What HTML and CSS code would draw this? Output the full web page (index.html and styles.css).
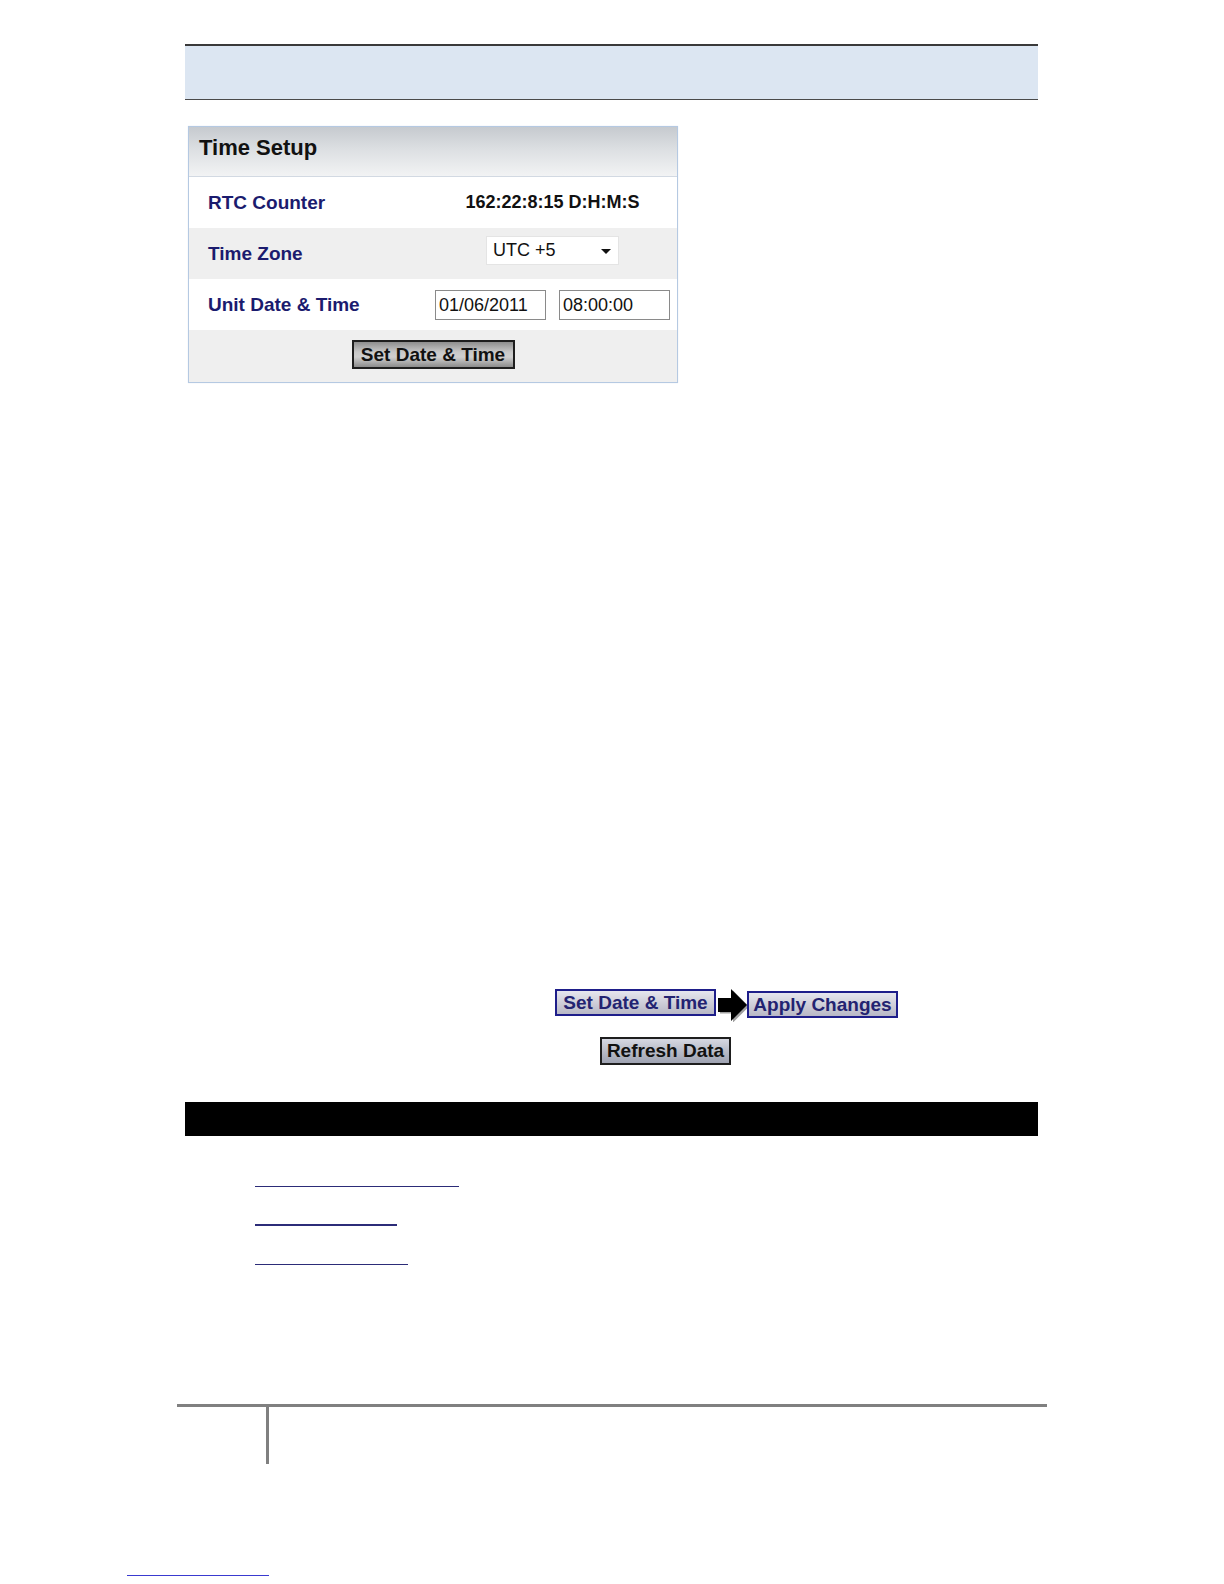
FILE: index.html
```html
<!DOCTYPE html>
<html>
<head>
<meta charset="utf-8">
<link rel="stylesheet" href="styles.css">
</head>
<body>
<div class="page">
  <div class="topbar"></div>

  <div class="panel">
    <div class="panel-head">Time Setup</div>
    <div class="row row-white">
      <div class="label">RTC Counter</div>
      <div class="value"><span class="counter">162:22:8:15 D:H:M:S</span></div>
    </div>
    <div class="row row-gray">
      <div class="label">Time Zone</div>
      <div class="value">
        <div class="select"><span>UTC +5</span><span class="caret"></span></div>
      </div>
    </div>
    <div class="row row-white">
      <div class="label">Unit Date &amp; Time</div>
      <div class="value inputs">
        <div class="input">01/06/2011</div>
        <div class="input">08:00:00</div>
      </div>
    </div>
    <div class="row row-gray row-btn">
      <div class="btn-dark">Set Date &amp; Time</div>
    </div>
  </div>

  <div class="actions">
    <div class="action-line">
      <div class="btn-blue btn-set">Set Date &amp; Time</div>
      <svg class="arrow" width="32" height="34" viewBox="0 0 32 34">
        <path d="M1 10 H14 V1 L30 17 L14 33 V24 H1 Z" fill="#a0a0a0" transform="translate(2,1.5)"/>
        <path d="M1 10 H14 V1 L30 17 L14 33 V24 H1 Z" fill="#000"/>
      </svg>
      <div class="btn-blue btn-apply">Apply Changes</div>
    </div>
    <div class="action-line second">
      <div class="btn-refresh">Refresh Data</div>
    </div>
  </div>

  <div class="blackbar"></div>

  <ul class="links">
    <li class="first"><a class="blank-link w1"></a></li>
    <li><a class="blank-link w2 thick"></a></li>
    <li><a class="blank-link w3"></a></li>
  </ul>
</div>

<div class="footer">
  <div class="footrule"></div>
  <div class="footvert"></div>
</div>

<div class="bottomlink"></div>
</body>
</html>
```

FILE: styles.css
```css
html, body {
  margin: 0;
  padding: 0;
  background: #ffffff;
  font-family: "Liberation Sans", Arial, sans-serif;
}

.page {
  margin-left: 185px;
  width: 853px;
  padding-top: 44px;
}

.topbar {
  height: 53px;
  background: #dce6f2;
  border-top: 2px solid #3a3a3a;
  border-bottom: 1px solid #4a4a4a;
}

.panel {
  margin-top: 26px;
  margin-left: 3px;
  width: 488px;
  border: 1px solid #b5c9e2;
  box-shadow: 0 0 1px #d8e2ee;
}

.panel-head {
  height: 49px;
  line-height: 42px;
  padding-left: 10px;
  font-size: 22px;
  font-weight: bold;
  color: #111;
  background: linear-gradient(to bottom, #c6cacf 0%, #dcdfe2 45%, #f2f3f4 100%);
  border-bottom: 1px solid #d2d9e2;
}

.row {
  height: 51px;
  display: flex;
  align-items: center;
}

.row-white { background: #ffffff; }
.row-gray { background: #efefef; }

.label {
  width: 246px;
  box-sizing: border-box;
  padding-left: 19px;
  font-size: 19px;
  font-weight: bold;
  color: #1b1b6e;
}

.value {
  width: 235px;
  display: flex;
  justify-content: center;
}

.counter {
  font-size: 18px;
  font-weight: bold;
  color: #111;
}

.select {
  width: 133px;
  height: 29px;
  box-sizing: border-box;
  background: #fff;
  border: 1px solid #e4e4e4;
  display: flex;
  align-items: center;
  justify-content: space-between;
  padding: 0 7px 0 6px;
  font-size: 18px;
  color: #111;
  margin-top: -6px;
}

.caret {
  width: 0;
  height: 0;
  border-left: 5px solid transparent;
  border-right: 5px solid transparent;
  border-top: 5px solid #111;
  margin-top: 2px;
}

.inputs {
  justify-content: space-between;
}

.input {
  width: 111px;
  height: 30px;
  box-sizing: border-box;
  border: 1px solid #8a8a8a;
  background: #fff;
  font-size: 18px;
  line-height: 28px;
  padding-left: 3px;
  color: #111;
}

.row-btn {
  justify-content: center;
  height: 52px;
}

.btn-dark {
  width: 163px;
  height: 29px;
  box-sizing: border-box;
  border: 2px solid #1e1e1e;
  background: linear-gradient(to bottom, #8e8e8e 0%, #c8c8c8 40%, #cfcfcf 60%, #8c8c8c 100%);
  font-size: 19px;
  font-weight: bold;
  color: #111;
  text-align: center;
  line-height: 25px;
  margin-top: -4px;
}

.actions {
  margin-top: 605px;
  padding-left: 370px;
}

.action-line {
  display: flex;
  align-items: flex-start;
}

.btn-blue {
  height: 27px;
  box-sizing: border-box;
  border: 2px solid #1e1e8a;
  background: linear-gradient(to bottom, #e6e6ee 0%, #cfcfd9 50%, #b8b8c6 100%);
  font-size: 19px;
  font-weight: bold;
  color: #232371;
  text-align: center;
  line-height: 23px;
}

.btn-set {
  width: 161px;
  margin-top: 1px;
}

.arrow {
  display: block;
  margin-left: 1px;
}

.btn-apply {
  width: 151px;
  margin-top: 3px;
  margin-left: -2px;
}

.second {
  margin-top: 15px;
  padding-left: 45px;
}

.btn-refresh {
  width: 131px;
  height: 28px;
  box-sizing: border-box;
  border: 2px solid #1e1e1e;
  background: linear-gradient(to bottom, #d6d8e2 0%, #b9bcc8 50%, #9fa3b2 100%);
  font-size: 19px;
  font-weight: bold;
  color: #111;
  text-align: center;
  line-height: 24px;
}

.blackbar {
  margin-top: 37px;
  height: 34px;
  background: #000;
}

.links {
  list-style: none;
  margin: 0;
  padding: 0 0 0 70px;
}

.links li {
  height: 39px;
}

.links li.first {
  height: 51px;
}

.blank-link {
  display: block;
  height: 39px;
  box-sizing: border-box;
  border-bottom: 1px solid #2c2c78;
}

.links li.first .blank-link {
  height: 51px;
}

.thick { border-bottom-width: 2px; }

.w1 { width: 204px; }
.w2 { width: 142px; }
.w3 { width: 153px; }

.footer {
  margin-top: 139px;
  margin-left: 177px;
  width: 870px;
}

.footrule {
  height: 3px;
  background: #808080;
}

.footvert {
  margin-left: 89px;
  width: 3px;
  height: 57px;
  background: #808080;
}

.bottomlink {
  margin-top: 111px;
  margin-left: 127px;
  width: 142px;
  height: 1px;
  background: #3a3ad0;
}
```
